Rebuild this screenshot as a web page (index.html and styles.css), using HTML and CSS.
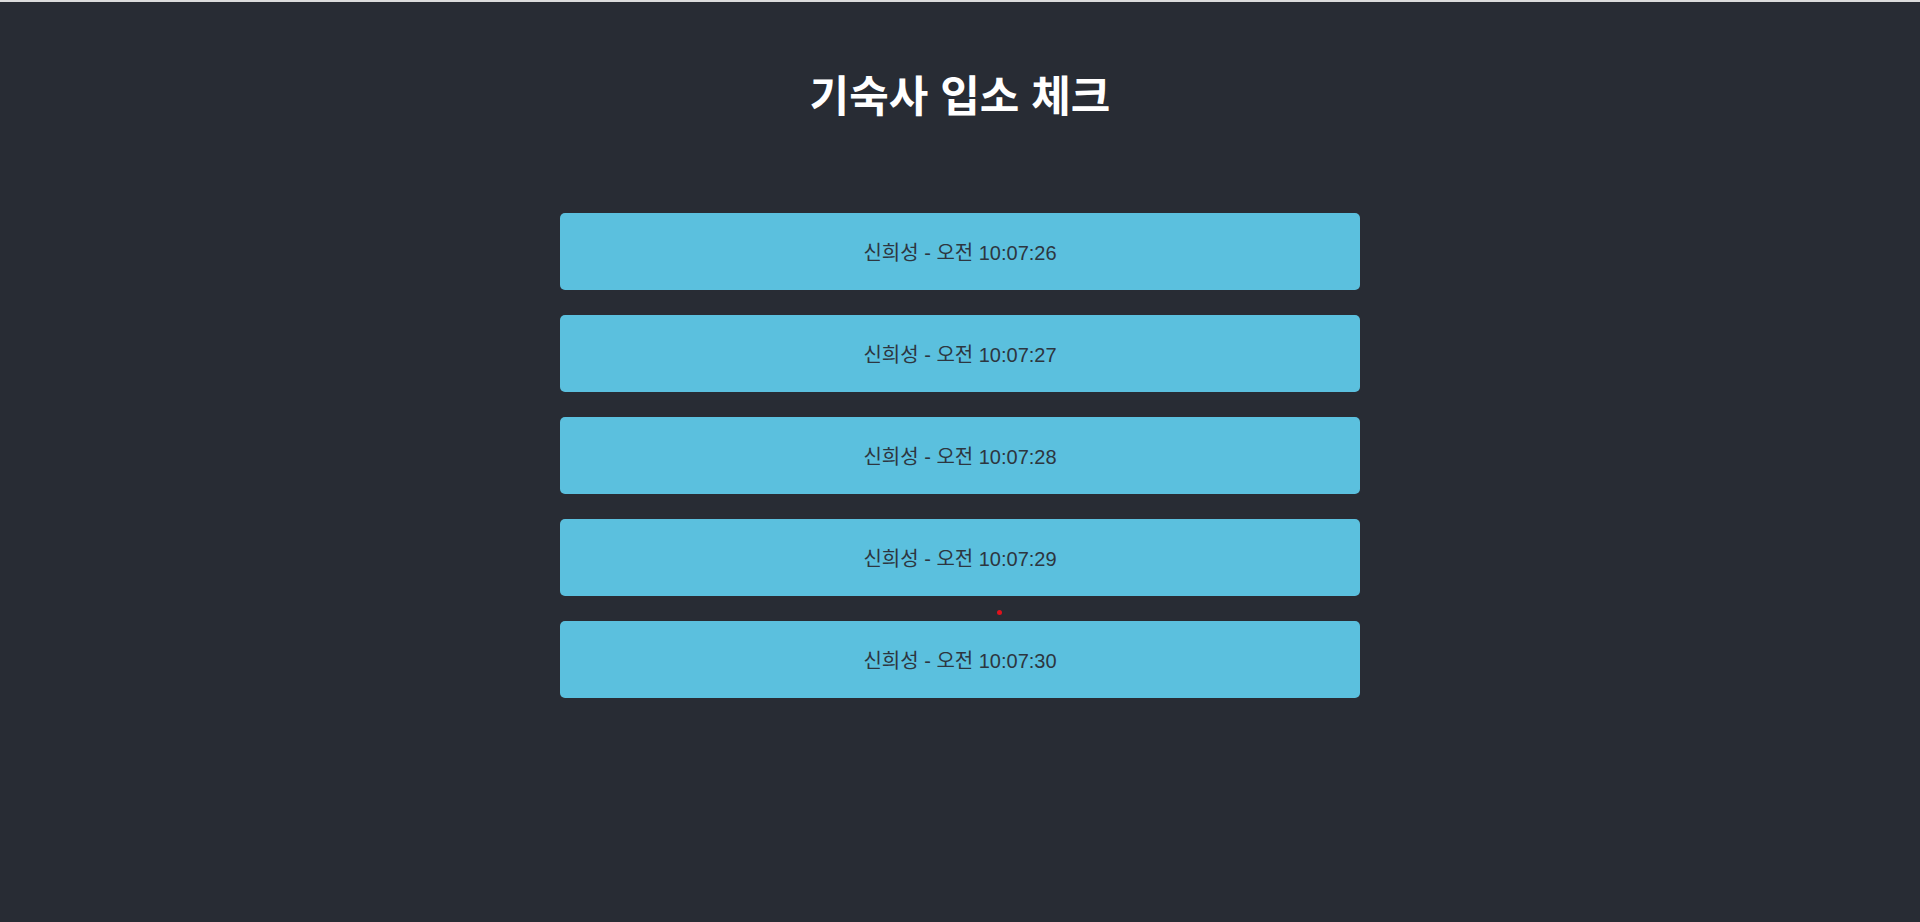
FILE: index.html
```html
<!DOCTYPE html>
<html lang="ko">
<head>
<meta charset="utf-8">
<title>기숙사 입소 체크</title>
<link rel="stylesheet" href="styles.css">
</head>
<body>
<div class="app">
  <h1 class="title">기숙사 입소 체크</h1>
  <ul class="list">
    <li class="item">신희성 - 오전 10:07:26</li>
    <li class="item">신희성 - 오전 10:07:27</li>
    <li class="item">신희성 - 오전 10:07:28</li>
    <li class="item">신희성 - 오전 10:07:29</li>
    <li class="item">신희성 - 오전 10:07:30</li>
  </ul>
  <span class="dot"></span>
</div>
</body>
</html>
```
FILE: styles.css
```css
html, body {
  margin: 0;
  padding: 0;
  height: 100%;
}
body {
  background: #282c34;
  border-top: 2px solid #dcdcdc;
  box-sizing: border-box;
  font-family: "Liberation Sans", "Noto Sans CJK KR", sans-serif;
}
.app {
  position: relative;
  display: flex;
  flex-direction: column;
  align-items: center;
  padding-top: 71px;
}
.title {
  margin: 0;
  color: #ffffff;
  font-size: 43px;
  line-height: 48px;
  font-weight: 700;
}
.list {
  list-style: none;
  margin: 92px 0 0 0;
  padding: 0;
  width: 800px;
  display: flex;
  flex-direction: column;
  gap: 25px;
}
.item {
  background: #5bc0de;
  border-radius: 5px;
  height: 77px;
  display: flex;
  align-items: center;
  justify-content: center;
  font-size: 20px;
  color: #2d3640;
}
.dot {
  position: absolute;
  left: 997px;
  top: 608px;
  width: 5px;
  height: 5px;
  border-radius: 50%;
  background: #e0121c;
}
```
